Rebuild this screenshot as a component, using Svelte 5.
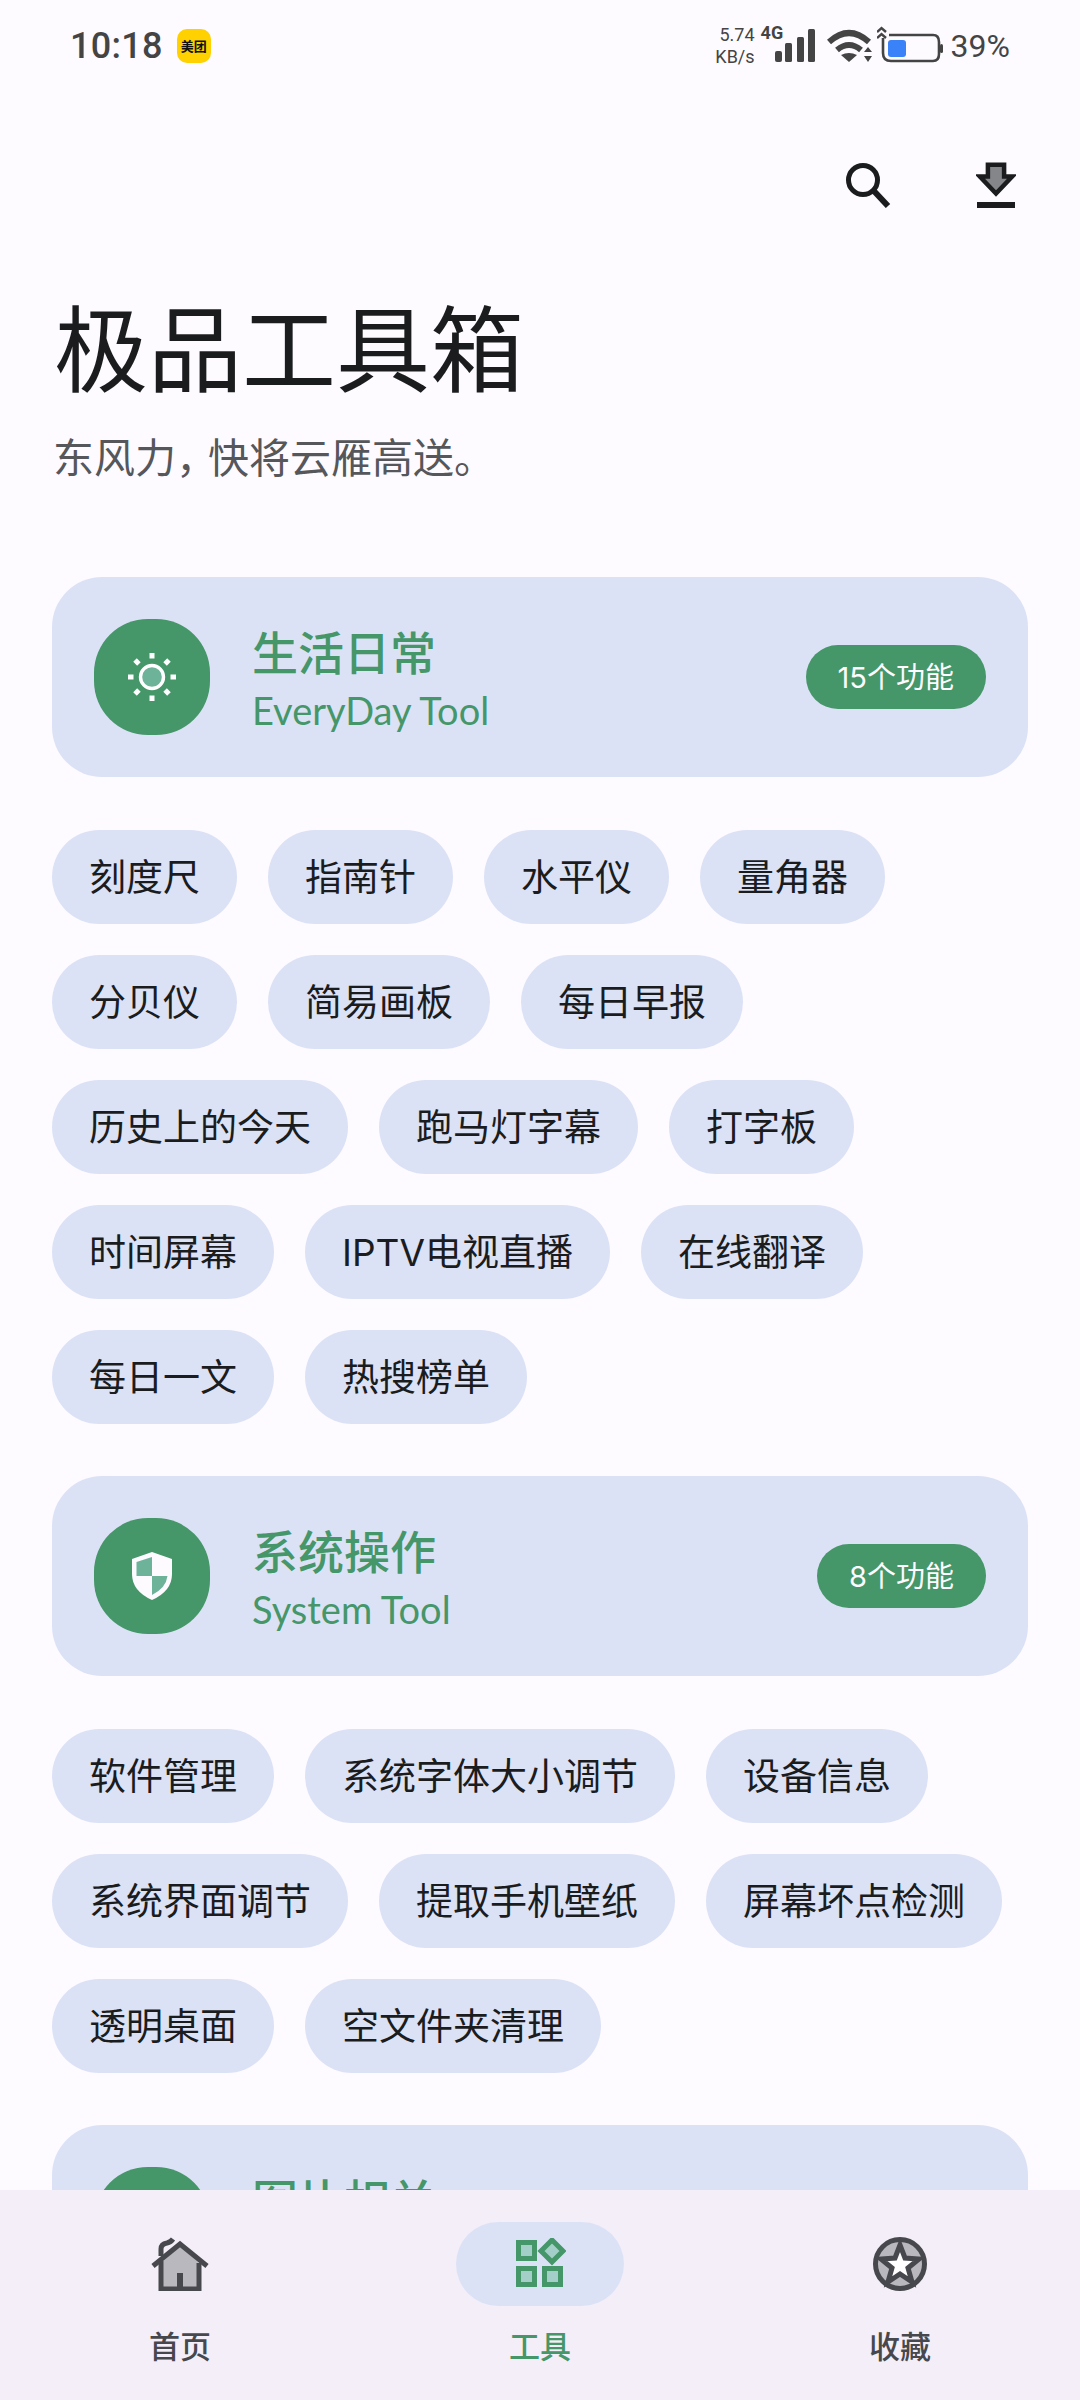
<script>
  const groups = [
    {
      title: "生活日常", sub: "EveryDay Tool", count: "15个功能", icon: "sun",
      items: ["刻度尺", "指南针", "水平仪", "量角器", "分贝仪", "简易画板", "每日早报", "历史上的今天", "跑马灯字幕", "打字板", "时间屏幕", "IPTV电视直播", "在线翻译", "每日一文", "热搜榜单"]
    },
    {
      title: "系统操作", sub: "System Tool", count: "8个功能", icon: "shield",
      items: ["软件管理", "系统字体大小调节", "设备信息", "系统界面调节", "提取手机壁纸", "屏幕坏点检测", "透明桌面", "空文件夹清理"]
    },
    { title: "图片相关", sub: "", count: "", icon: "", items: [] }
  ];
  const rays = [0, 45, 90, 135, 180, 225, 270, 315];
</script>

<div class="app">
  <div class="scroll">
    <div class="status">
      <div class="status-left">
        <span class="time">10:18</span>
        <span class="mt">美团</span>
      </div>
      <div class="status-right">
        <div class="speed"><span>5.74</span><span>KB/s</span></div>
        <div class="net">
          <span class="four-g">4G</span>
        </div>
        <svg class="signal" width="42" height="34" viewBox="0 0 42 34" fill="#444">
          <rect x="1" y="22" width="7" height="11" rx="2" />
          <rect x="11" y="14" width="7" height="19" rx="1.5" />
          <rect x="23" y="8" width="7" height="25" rx="1.5" />
          <rect x="34" y="0" width="7" height="33" rx="1.5" />
        </svg>
        <svg class="wifi" width="46" height="34" viewBox="0 0 46 34" fill="none" stroke="#444" stroke-width="6">
          <path d="M2 13 Q22 -5 42 13" />
          <path d="M10 21 Q22 11 34 21" />
          <path d="M14 26 L22 33 L30 26 Q22 22 14 26 Z" fill="#444" stroke="none" />
          <path d="M37 23 L41 18 L45 23 Z M37 27 L41 33 L45 27 Z" fill="#444" stroke="none" />
        </svg>
        <svg class="battery" width="66" height="42" viewBox="0 0 66 42" fill="none">
          <path d="M0 9 L4.500 5 L9 9 M0 15 L4.500 11 L9 15" stroke="#444" stroke-width="2.4" />
          <path d="M6 15 V30 Q6 38 14 38 H56 Q62 38 62 31 V19 Q62 12 56 12 H12" stroke="#444" stroke-width="2.6" />
          <rect x="63" y="21" width="3" height="9" rx="1.5" fill="#444" />
          <rect x="11" y="17" width="18" height="17" rx="3" fill="#3a82f7" />
        </svg>
        <span class="pct">39%</span>
      </div>
    </div>

    <div class="toolbar">
      <svg width="46" height="46" viewBox="0 0 46 46" fill="none" stroke="#1a1c1e">
        <circle cx="18" cy="18" r="14.5" stroke-width="5" />
        <path d="M28 28 L43 44" stroke-width="6" />
      </svg>
      <svg width="40" height="46" viewBox="0 0 40 46">
        <path d="M11 2 H29 V15 H38 L20 34 L2 15 H11 Z" fill="#85868a" stroke="#1a1c1e" stroke-width="5" stroke-linejoin="miter" transform="translate(2 1) scale(.9)" />
        <rect x="1" y="40" width="38" height="6" fill="#1a1c1e" />
      </svg>
    </div>

    <div class="intro">
      <h1>极品工具箱</h1>
      <p>东风力<span class="comma">，</span>快将云雁高送。</p>
    </div>

    {#each groups as group}
      <section class="group">
        <div class="card">
          <div class="card-icon">
            {#if group.icon === "sun"}
              <svg width="48" height="48" viewBox="0 0 48 48">
                <circle cx="24" cy="24" r="11.5" fill="#6db399" stroke="#fff" stroke-width="3.4" />
                {#each rays as r}
                  <rect x="21.5" y="0" width="5" height="5.5" fill="#fff" transform="rotate({r} 24 24)" />
                {/each}
              </svg>
            {:else if group.icon === "shield"}
              <svg width="40" height="48" viewBox="0 0 40 48">
                <path d="M20 0 L40 7 V22 Q40 39 20 48 Q0 39 0 22 V7 Z" fill="#fdfbff" />
                <path d="M20 5 V24 H4.5 V10 Z M20 24 H35.5 Q34 36 20 43 Z" fill="#6db399" />
              </svg>
            {/if}
          </div>
          <div class="card-text">
            <div class="card-title">{group.title}</div>
            <div class="card-sub">{group.sub || "\u00a0"}</div>
          </div>
          {#if group.count}<span class="count">{group.count}</span>{/if}
        </div>
        {#if group.items.length}
          <div class="chips">
            {#each group.items as item}
              <span class="chip">{item}</span>
            {/each}
          </div>
        {/if}
      </section>
    {/each}
  </div>

  <nav class="bottom">
    <div class="tab">
      <div class="tab-icon">
        <svg width="58" height="54" viewBox="0 0 58 54" fill="none">
          <path d="M29 9 L49 27 V52 H9 V27 Z" fill="#bab8bf" />
          <path d="M2 29 L29 7 L56 29" stroke="#47484d" stroke-width="5" />
          <path d="M10 24 V52 H48 V26" stroke="#47484d" stroke-width="5" />
          <path d="M29 52 V36" stroke="#47484d" stroke-width="6" />
          <path d="M10 19 V12 Q10 7 16 6 Q20 5 22 2" stroke="#47484d" stroke-width="5" />
        </svg>
      </div>
      <span>首页</span>
    </div>
    <div class="tab active">
      <div class="tab-icon">
        <svg width="52" height="52" viewBox="-2 2 52 52">
          <g fill="#a4cfc8" stroke="#459669" stroke-width="5">
            <rect x="2.500" y="6.500" width="16" height="16" />
            <rect x="2.500" y="32.500" width="16" height="16" />
            <rect x="28.500" y="32.500" width="16" height="16" />
            <path d="M36 4 L47 15 L36 26 L25 15 Z" />
          </g>
        </svg>
      </div>
      <span>工具</span>
    </div>
    <div class="tab">
      <div class="tab-icon">
        <svg width="54" height="54" viewBox="0 0 54 54">
          <circle cx="27" cy="27" r="24.500" fill="#bab8bf" stroke="#47484d" stroke-width="5" />
          <path d="M27 8 L32 21 L46 22 L35 31 L39 45 L27 37 L15 45 L19 31 L8 22 L22 21 Z" fill="#fff" stroke="#47484d" stroke-width="5" stroke-linejoin="miter" />
        </svg>
      </div>
      <span>收藏</span>
    </div>
  </nav>
</div>

<style>
  :global(body) {
    margin: 0;
    background: #fdfbff;
  }

  .app {
    height: 2400px;
    display: flex;
    flex-direction: column;
    background: #fdfbff;
    color: #1a1c1e;
    font-family: "Noto Sans CJK SC", "Noto Sans", sans-serif;
  }

  .scroll {
    flex: 1;
    min-height: 0;
    overflow: hidden;
  }

  /* Status bar */
  .status {
    height: 92px;
    box-sizing: border-box;
    padding: 0 70px;
    display: flex;
    align-items: center;
    justify-content: space-between;
    color: #444;
  }

  .status-left {
    display: flex;
    align-items: center;
    gap: 14px;
  }

  .time {
    font-family: Roboto, sans-serif;
    font-size: 36px;
    font-weight: 500;
    letter-spacing: 0.3px;
  }

  .mt {
    width: 34px;
    height: 34px;
    border-radius: 10px;
    background: #ffd100;
    color: #111;
    font-size: 13px;
    font-weight: 700;
    line-height: 34px;
    text-align: center;
    white-space: nowrap;
  }

  .status-right {
    display: flex;
    align-items: center;
    font-family: Roboto, sans-serif;
  }

  .speed {
    display: flex;
    flex-direction: column;
    align-items: flex-end;
    font-size: 18px;
    line-height: 22px;
    width: 37px;
    white-space: nowrap;
  }

  .net {
    width: 19px;
    height: 46px;
    position: relative;
  }

  .four-g {
    position: absolute;
    left: 6px;
    top: -1px;
    font-size: 18px;
    font-weight: 700;
    line-height: 22px;
  }

  .signal { margin-left: 0; }
  .wifi { margin-left: 11px; }
  .battery { margin-left: 4px; margin-top: -4px; }

  .pct {
    font-size: 32px;
    margin-left: 8px;
  }

  /* Toolbar + title */
  .toolbar {
    display: flex;
    justify-content: flex-end;
    align-items: center;
    gap: 85px;
    padding: 70px 64px 0 0;
    height: 46px;
  }

  .intro {
    padding: 0 54px;
    margin-top: 80px;
  }

  h1 {
    margin: 0;
    font-size: 94px;
    font-weight: 400;
    line-height: 112px;
  }

  .intro p {
    margin: 30px 0 0 -1px;
    font-size: 41px;
    line-height: 50px;
    color: #55575b;
  }

  .comma { letter-spacing: -9px; }

  /* Groups */
  .group {
    padding: 0 52px;
    margin-bottom: 52px;
  }

  .intro + .group {
    margin-top: 97px;
  }

  .card {
    height: 200px;
    box-sizing: border-box;
    padding: 0 42px;
    border-radius: 50px;
    background: #dce2f6;
    display: flex;
    align-items: center;
  }

  .card-icon {
    width: 116px;
    height: 116px;
    flex: none;
    border-radius: 54px;
    background: #459669;
    display: flex;
    align-items: center;
    justify-content: center;
  }

  .card-text {
    flex: 1;
    margin-left: 42px;
  }

  .card-title {
    font-size: 46px;
    font-weight: 500;
    line-height: 56px;
    color: #459669;
  }

  .card-sub {
    margin-top: 10px;
    font-family: Lato, sans-serif;
    font-size: 38px;
    line-height: 44px;
    color: #459669;
  }

  .count {
    height: 64px;
    line-height: 66px;
    padding: 0 32px;
    border-radius: 32px;
    background: #459669;
    color: #fdfbff;
    font-family: Inter, "Noto Sans CJK SC", sans-serif;
    font-size: 29px;
    white-space: nowrap;
  }

  .chips {
    display: flex;
    flex-wrap: wrap;
    gap: 31px;
    margin-top: 53px;
  }

  .chip {
    height: 94px;
    line-height: 96px;
    padding: 0 37px;
    border-radius: 47px;
    background: #dce2f6;
    font-family: Inter, "Noto Sans CJK SC", sans-serif;
    font-size: 37px;
    white-space: nowrap;
  }

  /* Bottom nav */
  .bottom {
    height: 210px;
    flex: none;
    background: #f3eef7;
    display: grid;
    grid-template-columns: repeat(3, 1fr);
    position: relative;
  }

  .tab {
    display: flex;
    flex-direction: column;
    align-items: center;
    padding-top: 32px;
    font-size: 31px;
    font-weight: 500;
    color: #47484d;
  }

  .tab-icon {
    width: 168px;
    height: 84px;
    border-radius: 42px;
    display: flex;
    align-items: center;
    justify-content: center;
  }

  .tab span {
    margin-top: 17px;
    line-height: 44px;
  }

  .tab.active { color: #459669; }
  .tab.active .tab-icon { background: #dce2f6; }
</style>
